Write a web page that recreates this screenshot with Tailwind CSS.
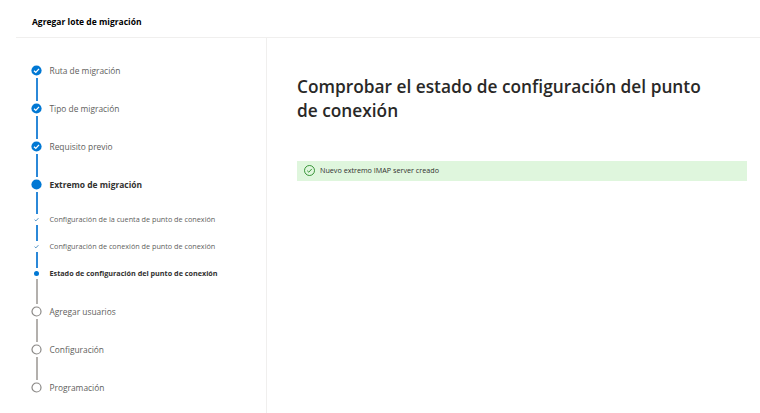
<!DOCTYPE html>
<html lang="es">
<head>
    <meta charset="UTF-8">
    <title>Agregar lote de migración</title>
    <script src="https://cdn.jsdelivr.net/npm/@tailwindcss/browser@4"></script>
</head>
<body class="bg-white font-['Open_Sans',sans-serif] text-[#323130] overflow-hidden">
    <div class="w-[760px] h-[413px] flex flex-col">
        <!-- cabecera -->
        <header class="ml-[16px] h-[37.5px] pl-[16px] pt-[15px] border-b border-[#f0efee]">
            <h1 class="text-[8.5px] leading-[13px] font-bold text-black">Agregar lote de migración</h1>
        </header>

        <div class="flex flex-1">
            <!-- pasos -->
            <nav class="w-[267px] border-r border-[#f0efee] pl-[31px] pt-[27px]">
                <div class="flex gap-[7.5px] h-[38px]">
                    <div class="w-[11px] flex flex-col items-center">
                        <svg class="w-[11px] h-[11px] shrink-0" viewBox="0 0 11 11"><circle cx="5.5" cy="5.5" r="5.1" fill="#0078d4"/><path d="M3 5.7 4.8 7.4 8 3.9" fill="none" stroke="#fff" stroke-width="1.3"/></svg>
                        <div class="w-[2px] h-[23px] mt-[2px] bg-[#2b88d8]"></div>
                    </div>
                    <span class="text-[8.4px] leading-[11px] text-[#605e5c]">Ruta de migración</span>
                </div>
                <div class="flex gap-[7.5px] h-[38px]">
                    <div class="w-[11px] flex flex-col items-center">
                        <svg class="w-[11px] h-[11px] shrink-0" viewBox="0 0 11 11"><circle cx="5.5" cy="5.5" r="5.1" fill="#0078d4"/><path d="M3 5.7 4.8 7.4 8 3.9" fill="none" stroke="#fff" stroke-width="1.3"/></svg>
                        <div class="w-[2px] h-[23px] mt-[2px] bg-[#2b88d8]"></div>
                    </div>
                    <span class="text-[8.4px] leading-[11px] text-[#605e5c]">Tipo de migración</span>
                </div>
                <div class="flex gap-[7.5px] h-[38px]">
                    <div class="w-[11px] flex flex-col items-center">
                        <svg class="w-[11px] h-[11px] shrink-0" viewBox="0 0 11 11"><circle cx="5.5" cy="5.5" r="5.1" fill="#0078d4"/><path d="M3 5.7 4.8 7.4 8 3.9" fill="none" stroke="#fff" stroke-width="1.3"/></svg>
                        <div class="w-[2px] h-[23px] mt-[2px] bg-[#2b88d8]"></div>
                    </div>
                    <span class="text-[8.4px] leading-[11px] text-[#605e5c]">Requisito previo</span>
                </div>
                <div class="flex gap-[7.5px] h-[35px]">
                    <div class="w-[11px] flex flex-col items-center">
                        <svg class="w-[11px] h-[11px] shrink-0" viewBox="0 0 11 11"><circle cx="5.5" cy="5.5" r="5.1" fill="#0078d4"/></svg>
                        <div class="w-[2px] h-[22px] mt-[2px] bg-[#2b88d8]"></div>
                    </div>
                    <span class="text-[8.45px] leading-[11px] font-bold text-[#323130]">Extremo de migración</span>
                </div>

                <!-- subpasos -->
                <div class="flex gap-[7.5px] h-[27px]">
                    <div class="w-[11px] flex flex-col items-center">
                        <svg class="w-[11px] h-[11px] shrink-0" viewBox="0 0 11 11"><path d="M3.6 5.7 4.9 6.9 7.4 4.2" fill="none" stroke="#3f87bd" stroke-width=".9"/></svg>
                        <div class="w-[2px] h-[16px] bg-[#2b88d8]"></div>
                    </div>
                    <span class="text-[7.25px] leading-[11px] text-[#605e5c]">Configuración de la cuenta de punto de conexión</span>
                </div>
                <div class="flex gap-[7.5px] h-[27px]">
                    <div class="w-[11px] flex flex-col items-center">
                        <svg class="w-[11px] h-[11px] shrink-0" viewBox="0 0 11 11"><path d="M3.6 5.7 4.9 6.9 7.4 4.2" fill="none" stroke="#3f87bd" stroke-width=".9"/></svg>
                        <div class="w-[2px] h-[16px] bg-[#2b88d8]"></div>
                    </div>
                    <span class="text-[7.25px] leading-[11px] text-[#605e5c]">Configuración de conexión de punto de conexión</span>
                </div>
                <div class="flex gap-[7.5px] h-[38px]">
                    <div class="w-[11px] flex flex-col items-center">
                        <div class="w-[11px] h-[11px] shrink-0 flex items-center justify-center">
                            <div class="w-[5px] h-[5px] rounded-full bg-[#0078d4]"></div>
                        </div>
                        <div class="w-[2px] h-[25px] bg-[#b3b0ad]"></div>
                    </div>
                    <span class="text-[7.22px] leading-[11px] font-bold text-[#323130]">Estado de configuración del punto de conexión</span>
                </div>

                <div class="flex gap-[7.5px] h-[38px]">
                    <div class="w-[11px] flex flex-col items-center">
                        <svg class="w-[11px] h-[11px] shrink-0" viewBox="0 0 11 11"><circle cx="5.5" cy="5.5" r="4.5" fill="none" stroke="#8a8886" stroke-width="1.2"/></svg>
                        <div class="w-[2px] h-[23px] mt-[2px] bg-[#b3b0ad]"></div>
                    </div>
                    <span class="text-[8.4px] leading-[11px] text-[#605e5c]">Agregar usuarios</span>
                </div>
                <div class="flex gap-[7.5px] h-[38px]">
                    <div class="w-[11px] flex flex-col items-center">
                        <svg class="w-[11px] h-[11px] shrink-0" viewBox="0 0 11 11"><circle cx="5.5" cy="5.5" r="4.5" fill="none" stroke="#8a8886" stroke-width="1.2"/></svg>
                        <div class="w-[2px] h-[23px] mt-[2px] bg-[#b3b0ad]"></div>
                    </div>
                    <span class="text-[8.4px] leading-[11px] text-[#605e5c]">Configuración</span>
                </div>
                <div class="flex gap-[7.5px]">
                    <svg class="w-[11px] h-[11px] shrink-0" viewBox="0 0 11 11"><circle cx="5.5" cy="5.5" r="4.5" fill="none" stroke="#8a8886" stroke-width="1.2"/></svg>
                    <span class="text-[8.4px] leading-[11px] text-[#605e5c]">Programación</span>
                </div>
            </nav>

            <!-- contenido -->
            <main class="flex-1 pl-[30px] pr-[13px] pt-[37px]">
                <h2 class="text-[17.3px] leading-[24px] font-semibold text-[#292827] w-[425px]">Comprobar el estado de configuración del punto de conexión</h2>
                <div class="mt-[38px] h-[20px] bg-[#dff6dd] flex items-center gap-[5px] pl-[7px]">
                    <svg class="w-[11px] h-[11px] shrink-0" viewBox="0 0 11 11"><circle cx="5.5" cy="5.5" r="5" fill="none" stroke="#107c10" stroke-width=".8"/><path d="M3.2 5.7 4.8 7.2 7.8 3.9" fill="none" stroke="#107c10" stroke-width=".8"/></svg>
                    <span class="text-[7.2px] leading-[11px] text-[#323130]">Nuevo extremo IMAP server creado</span>
                </div>
            </main>
        </div>
    </div>
</body>
</html>
